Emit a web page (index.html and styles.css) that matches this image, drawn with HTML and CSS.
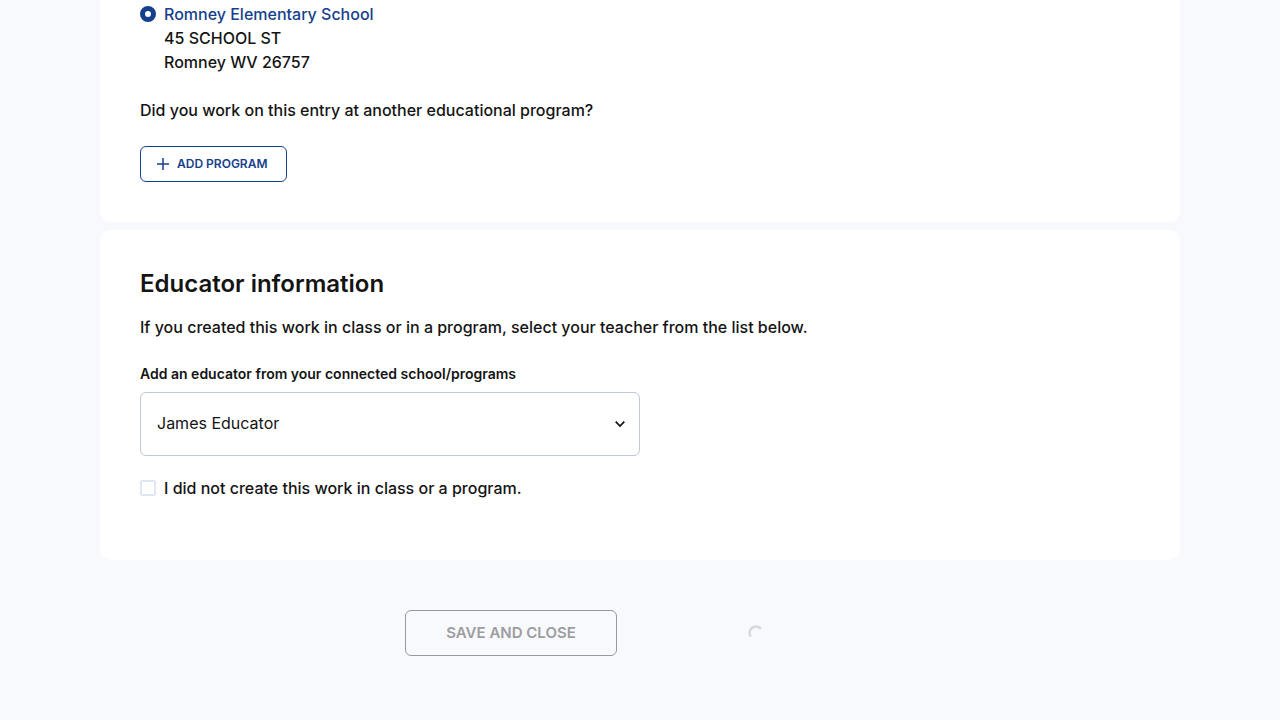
FILE: index.html
```html
<!DOCTYPE html>
<html lang="en">
<head>
<meta charset="utf-8">
<meta name="viewport" content="width=device-width, initial-scale=1">
<title>Educator information</title>
<link rel="stylesheet" href="styles.css">
</head>
<body>
<main class="page">
  <section class="card card-school">
    <label class="choice choice-school">
      <input class="radio" type="radio" name="school" checked>
      <span class="school"><span class="school-name">Romney Elementary School</span><span>45 SCHOOL ST</span><span>Romney WV 26757</span></span>
    </label>
    <p class="question">Did you work on this entry at another educational program?</p>
    <button class="add-button" type="button">
      <svg class="plus" viewBox="0 0 12 12" aria-hidden="true"><path d="M6 0v12M0 6h12"/></svg>
      ADD PROGRAM
    </button>
  </section>
  <section class="card card-educator">
    <h2 class="title">Educator information</h2>
    <p class="intro">If you created this work in class or in a program, select your teacher from the list below.</p>
    <label class="field-label" for="educator">Add an educator from your connected school/programs</label>
    <div class="select-wrap">
      <select class="select" id="educator"><option>James Educator</option></select>
      <svg class="chevron" viewBox="0 0 12 8" aria-hidden="true"><path d="M1.700 1.700 6 6l4.300-4.300"/></svg>
    </div>
    <label class="choice">
      <input class="checkbox" type="checkbox">
      <span>I did not create this work in class or a program.</span>
    </label>
  </section>
  <div class="actions">
    <button class="save-button" type="button" disabled>SAVE AND CLOSE</button>
    <div class="loading" role="status" aria-label="Loading">
      <svg class="spinner" viewBox="0 0 16 16" aria-hidden="true"><path d="M2.800 11.500A6.200 6.200 0 0 1 13 4"/></svg>
    </div>
  </div>
</main>
</body>
</html>
```
FILE: styles.css
```css
* { box-sizing: border-box; }
body {
  margin: 0;
  background: #f8f9fd;
  color: #141414;
  font: 500 16px/24px Inter, "Liberation Sans", sans-serif;
}
p, h2 { margin: 0; }
.page { max-width: 1080px; margin: 0 auto; }
.card { background: #fff; border-radius: 10px; padding: 40px; }
.card-school { border-radius: 0 0 10px 10px; padding-top: 2px; margin-bottom: 8px; }
.choice { display: flex; align-items: flex-start; gap: 8px; }
.radio, .checkbox { appearance: none; width: 16px; height: 16px; margin: 4px 0; flex: none; background: #fff; }
.radio { border: 5px solid #163f8c; border-radius: 50%; }
.checkbox { border: 2px solid #e0e7f1; border-radius: 2px; }
.school { display: flex; flex-direction: column; }
.school-name { color: #163f8c; }
.question { margin: 24px 0; }
.add-button {
  display: flex; align-items: center; gap: 8px;
  min-width: 147px; height: 36px; padding: 0 16px;
  border: 1px solid #163f8c; border-radius: 6px;
  background: #fff; color: #163f8c;
  font: 600 12px/16px Inter, "Liberation Sans", sans-serif;
}
.plus { width: 12px; height: 12px; fill: none; stroke: currentColor; stroke-width: 1.5; }
.card-educator { padding-top: 36px; padding-bottom: 60px; }
.title { font-size: 24px; line-height: 36px; font-weight: 600; margin-bottom: 13px; }
.intro { margin-bottom: 24px; }
.field-label { display: block; font-size: 14px; line-height: 21px; font-weight: 600; margin-bottom: 8px; }
.select-wrap { position: relative; max-width: 500px; margin-bottom: 20px; }
.select {
  appearance: none; display: block; width: 100%; height: 64px; padding: 0 16px 2px;
  border: 1px solid #bdc7d6; border-radius: 6px; background: #fff; color: #141414;
  font: 400 16px/24px Inter, "Liberation Sans", sans-serif;
}
.chevron { position: absolute; right: 14px; top: 28px; width: 12px; height: 8px; fill: none; stroke: #141414; stroke-width: 1.7; pointer-events: none; }
.actions { display: flex; justify-content: center; align-items: center; gap: 20px; padding: 50px 0 64px; }
.save-button {
  width: 212px; height: 46px; border: 1px solid #98999d; border-radius: 6px;
  background: transparent; color: #9d9d9f;
  font: 600 15px/24px Inter, "Liberation Sans", sans-serif;
}
.loading { display: flex; justify-content: center; width: 238px; }
.spinner { width: 16px; height: 16px; fill: none; stroke: #d6d8dd; stroke-width: 2.5; }
```
